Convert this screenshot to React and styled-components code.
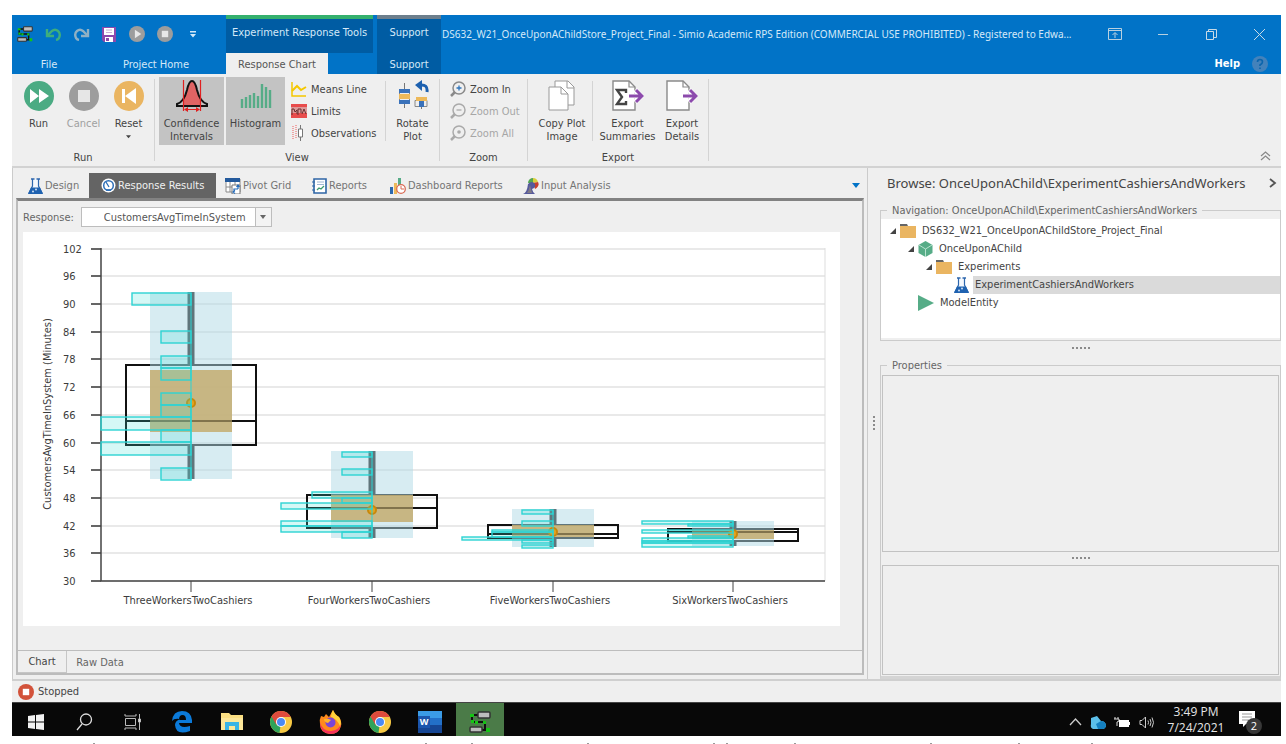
import styled, { createGlobalStyle } from 'styled-components';

const GlobalStyle = createGlobalStyle`
  * {
    box-sizing: border-box;
  }

  body {
    margin: 0;
    background: #fff;
    color: #444;
    font: 11px/13px 'DejaVu Sans Condensed', 'Noto Sans', sans-serif;
  }

  button, select {
    margin: 0;
    padding: 0;
    border: 0;
    border-radius: 0;
    background: none;
    color: inherit;
    font: inherit;
  }

  svg {
    display: block;
    flex: none;
  }
`;

const Page = styled.div`
  min-height: 100vh;
  display: flex;
  flex-direction: column;
  padding: 15px 5px 0 12px;
`;

const Window = styled.div`
  flex: 1;
  display: flex;
  flex-direction: column;
  background: #efefef;
`;

/* title bar */

const TitleBar = styled.header`
  height: 38px;
  display: flex;
  background: #0173c7;
  color: #d5e9f8;
`;

const QuickAccess = styled.div`
  width: 214px;
  flex: none;
  display: flex;
  align-items: center;
  gap: 12px;
  padding-left: 5px;
`;

const IconButton = styled.button`
  display: flex;
  align-items: center;
  justify-content: center;
  width: ${(props) => props.$width || 16}px;
  height: 20px;
`;

const ContextTitle = styled.div`
  width: ${(props) => props.$width}px;
  flex: none;
  margin-right: ${(props) => props.$gap || 0}px;
  padding: 7px 0 0;
  border-top: 4px solid ${(props) => props.$accent};
  background: #005ca3;
  text-align: center;
  white-space: nowrap;
`;

const WindowTitle = styled.div`
  flex: 1;
  min-width: 0;
  padding: 13px 0 0 1px;
  font: 10px/13px 'Noto Sans', sans-serif;
  white-space: nowrap;
`;

const WindowButtons = styled.div`
  display: flex;
  align-items: center;
  flex: none;
  gap: 32px;
  padding: 0 14px 0 16px;
`;

const RibbonTabs = styled.nav`
  height: 21px;
  display: flex;
  background: #0173c7;
  color: #d5e9f8;
`;

const RibbonTab = styled.button`
  width: ${(props) => props.$width}px;
  margin-right: ${(props) => props.$gap || 0}px;
  padding-top: 2px;
  background: ${(props) => props.$fill || 'none'};
  color: ${(props) => (props.$active ? '#555' : '#d5e9f8')};
`;

const HelpArea = styled.div`
  margin-left: auto;
  display: flex;
  align-items: center;
  gap: 12px;
  padding-right: 13px;
  color: #fff;
  font-weight: bold;
`;

/* ribbon */

const Ribbon = styled.div`
  height: 94px;
  display: flex;
  border-bottom: 2px solid #d2d2d2;
`;

const Group = styled.section`
  width: ${(props) => props.$width}px;
  height: 82px;
  margin-top: 5px;
  display: flex;
  flex-direction: column;
  border-right: 1px solid #d4d4d4;
`;

const GroupBody = styled.div`
  height: 68px;
  flex: none;
  margin-top: -2px;
  display: flex;
  padding-left: ${(props) => props.$pad}px;
`;

const GroupName = styled.div`
  margin-top: 6px;
  text-align: center;
`;

const BigButton = styled.button`
  width: ${(props) => props.$width}px;
  height: 68px;
  margin-right: ${(props) => props.$gap || 0}px;
  padding-top: 3px;
  display: flex;
  flex-direction: column;
  align-items: center;
  gap: 5px;
  background: ${(props) => (props.$pressed ? '#c3c3c3' : 'none')};

  &:disabled {
    color: #a0a0a0;
  }
`;

const IconSlot = styled.span`
  height: 32px;
  flex: none;
  display: flex;
  align-items: center;
`;

const SmallStack = styled.div`
  width: ${(props) => props.$width}px;
  padding-top: 1px;
  display: flex;
  flex-direction: column;
`;

const SmallButton = styled.button`
  height: 22px;
  display: flex;
  align-items: center;
  gap: 4px;
  white-space: nowrap;

  &:disabled {
    color: #a6a6a6;
  }
`;

const InnerRule = styled.div`
  width: 1px;
  height: 60px;
  margin-top: 4px;
  background: #d4d4d4;
`;

const RibbonEnd = styled.div`
  margin-left: auto;
  display: flex;
  align-items: flex-end;
  padding: 0 8px 0 0;
`;

/* main area */

const Main = styled.main`
  flex: 1;
  display: flex;
  border-bottom: 2px solid #cfcfcf;
`;

const Documents = styled.section`
  flex: 1;
  min-width: 0;
  display: flex;
  flex-direction: column;
  padding: 5px 3px 4px;
  border: solid #cbcbcb;
  border-width: 0 1px;
`;

const DocTabs = styled.nav`
  height: 25px;
  display: flex;
`;

const DocTab = styled.button`
  width: ${(props) => props.$width}px;
  padding-left: ${(props) => props.$pad}px;
  display: flex;
  align-items: center;
  gap: 2px;
  background: ${(props) => (props.$active ? '#646464' : 'none')};
  color: ${(props) => (props.$active ? '#f0f0f0' : '#747474')};
  white-space: nowrap;
`;

const TabMenu = styled.button`
  margin-left: auto;
  width: 16px;
  display: flex;
  align-items: center;
  justify-content: center;
`;

const DocBody = styled.div`
  flex: 1;
  display: flex;
  flex-direction: column;
  border: 2px solid #bcbcbc;
  border-top: 3px solid #828282;
`;

const ResponseRow = styled.div`
  display: flex;
  align-items: center;
  gap: 7px;
  padding: 6px 0 5px 5px;
  color: #666;
`;

const SelectBox = styled.div`
  position: relative;
  width: 191px;
  height: 20px;
  border: 1px solid #bdbdbd;
  background: #fff;

  select {
    width: 100%;
    height: 18px;
    padding-left: 22px;
    appearance: none;
    color: #555;
  }

  svg {
    position: absolute;
    top: 0;
    right: 0;
    pointer-events: none;
  }
`;

const ChartPanel = styled.div`
  flex: 1;
  margin: 0 22px 0 5px;

  svg {
    width: 100%;
    height: auto;
    background: #fff;
  }

  text {
    font: 11px 'DejaVu Sans Condensed', 'Noto Sans', sans-serif;
    fill: #3c3c3c;
  }
`;

const BottomTabs = styled.nav`
  height: 23px;
  display: flex;
  border-top: 1px solid #bdbdbd;
`;

const BottomTab = styled.button`
  width: ${(props) => props.$width}px;
  height: 22px;
  border: solid #c6c6c6;
  border-width: ${(props) => (props.$active ? '0 1px 1px 0' : '0')};
  color: ${(props) => (props.$active ? '#444' : '#666')};
`;

const Grip = styled.div`
  width: 12px;
  display: flex;
  align-items: center;
  justify-content: center;
`;

const Dots = styled.div`
  width: ${(props) => (props.$vertical ? 2 : 18)}px;
  height: ${(props) => (props.$vertical ? 16 : 2)}px;
  margin: ${(props) => props.$margin || 0};
  background: repeating-linear-gradient(
    ${(props) => (props.$vertical ? '180deg' : '90deg')},
    #8b8b8b 0 2px, transparent 2px 4px
  );
`;

const Browser = styled.aside`
  width: 401px;
  flex: none;
  display: flex;
  flex-direction: column;
`;

const BrowseHeader = styled.div`
  height: 34px;
  display: flex;
  align-items: center;
  justify-content: space-between;
  padding: 0 4px 4px 7px;
  font: 13px/18px 'Noto Sans', sans-serif;
`;

const NavBox = styled.fieldset`
  height: 139px;
  min-width: 0;
  margin: 0;
  padding: 0;
  border: 1px solid #cbcbcb;

  legend {
    margin-left: 6px;
    padding: 0 5px;
    line-height: 17px;
    color: #666;
  }
`;

const Tree = styled.div`
  height: 119px;
  padding-top: 3px;
  background: #fff;
`;

const TreeRow = styled.div`
  height: 18px;
  display: flex;
  align-items: center;
  gap: 4px;
  padding-left: ${(props) => 9 + props.$depth * 18}px;
`;

const TreeLabel = styled.span`
  flex: 1;
  padding-left: 2px;
  line-height: 18px;
  background: ${(props) => (props.$selected ? '#dadada' : 'none')};
`;

const Properties = styled.fieldset`
  flex: 1;
  min-width: 0;
  margin: 9px 0 0;
  padding: 2px 1px 1px;
  display: flex;
  flex-direction: column;
  border: 1px solid #cbcbcb;
  border-bottom: 3px solid #d4d4d4;

  legend {
    margin-left: 5px;
    padding: 0 5px;
    line-height: 15px;
    color: #666;
  }
`;

const Pane = styled.div`
  height: ${(props) => props.$height || 'auto'};
  flex: ${(props) => props.$grow || 'none'};
  border: 1px solid #c2c2c2;
`;

const Status = styled.footer`
  height: 21px;
  display: flex;
  align-items: center;
  gap: 4px;
  padding-left: 6px;
`;

/* desktop task bar */

const TaskBar = styled.footer`
  height: 34px;
  display: flex;
  overflow: hidden;
  background: #080808;
  border-top: 1px solid #444;
  color: #e6e6e6;
`;

const TaskButton = styled.button`
  width: ${(props) => props.$width || 49}px;
  display: flex;
  align-items: center;
  justify-content: center;
  padding-top: 5px;
  background: ${(props) => (props.$active ? '#4b7b48' : 'none')};
`;

const Tray = styled.div`
  margin-left: auto;
  display: flex;
  align-items: center;
  gap: 8px;
  padding: 5px 18px 0 0;
`;

const Clock = styled.time`
  align-self: flex-start;
  width: 66px;
  margin-top: -4px;
  text-align: center;
  font: 12px/16px 'Open Sans', 'Noto Sans', sans-serif;
`;

const Below = styled.div`
  height: 8px;
  padding-top: 7px;
  overflow: hidden;
`;

const FlaskIcon = () => (
  <svg width="15" height="16" viewBox="0 0 15 16">
    <path d="M4.500 1v7L1 15h13l-3.500-7V1" fill="#f4f8fd" stroke="#2c66ad" strokeWidth="1.200" />
    <path d="M3 1h3.500M8.500 1H12" stroke="#2c66ad" strokeWidth="1.600" />
    <path d="M3 9.500h9l3 6.500H0z" fill="#1f62b0" />
    <circle cx="5" cy="13.500" r="1" fill="#cfe0f3" />
    <circle cx="8" cy="11.500" r="1" fill="#cfe0f3" />
  </svg>
);

const FlowIcon = ({ size }) => (
  <svg width={size} height={size} viewBox="0 0 22 22">
    <path d="M3 4v7h13v8M3 4h6M13 19h6" fill="none" stroke="#111" strokeWidth="2" />
    <rect x="9" y="1" width="12" height="6" rx="1" fill="#bdbdbd" stroke="#333" strokeWidth="1.500" />
    <rect x="1" y="16" width="12" height="5" rx="1" fill="#bdbdbd" stroke="#333" strokeWidth="1.500" />
    <path d="M1 3h4v3H1zM2 9h3v3H2zM6 10h3v3H6zM14 10h3v3h-3zM17 17h4v4h-4z" fill="#14c514" />
  </svg>
);

const UndoIcon = ({ color, flip }) => (
  <svg width="17" height="14" viewBox="0 0 17 14">
    <g transform={flip ? 'translate(17 0) scale(-1 1)' : undefined} fill="none" stroke={color} strokeWidth="2.400">
      <path d="M2 2v7h7" />
      <path d="M2.500 8.500L7 4Q10 1.500 13 4t1 7q-1 1.500-3 2" />
    </g>
  </svg>
);

const SaveIcon = () => (
  <svg width="14" height="15" viewBox="0 0 14 15">
    <path d="M0 0h14v15H2l-2-2z" fill="#8d49ad" />
    <path d="M2 1h10v7H2zM3 10h8v5H3z" fill="#fff" />
    <path d="M4 3h6M4 5.500h6" stroke="#c9b0d6" />
    <path d="M4 11h3v3H4z" fill="#8d49ad" />
  </svg>
);

const RoundIcon = ({ size, color, kind, mark = '#fff' }) => (
  <svg width={size} height={size} viewBox="0 0 30 30">
    <circle cx="15" cy="15" r="15" fill={color} />
    {kind === 'forward' && <path d="M6 8l9 7-9 7zM15 8l10 7-10 7z" fill={mark} />}
    {kind === 'play' && <path d="M11 7l12 8-12 8z" fill={mark} />}
    {kind === 'stop' && <path d="M9 9h12v12H9z" fill={mark} />}
    {kind === 'reset' && <path d="M8 8h3v14H8zM22 7v16l-11-8z" fill={mark} />}
  </svg>
);

const Caret = ({ color = '#444', size = 6 }) => (
  <svg width={size} height={size / 2 + 1} viewBox="0 0 8 5">
    <path d="M0 0h8L4 5z" fill={color} />
  </svg>
);

const QatCaret = () => (
  <svg width="6" height="7" viewBox="0 0 6 7">
    <path d="M0 0h6v1.500H0zM0 3h6L3 6.500z" fill="#d5e9f8" />
  </svg>
);

const BellIcon = () => (
  <svg width="32" height="34" viewBox="0 0 32 34">
    <path d="M7 26V20Q10 15 12 8 13.500 2 16 2t4 6q2 7 5 12v6z" fill="#e06464" />
    <path d="M1 27v-2Q8 23 11 11 13 2 16 2t5 9q3 12 10 14v2z" fill="none" stroke="#111" strokeWidth="2" />
    <path d="M7.500 1v31M24.500 1v31M9 30.500h14" stroke="#e02020" strokeWidth="1.200" />
    <path d="M8 30.500l4-2.500v5zM24 30.500L20 28v5z" fill="#e02020" />
  </svg>
);

const HistogramIcon = () => (
  <svg width="32" height="34" viewBox="0 0 32 34">
    <path d="M2 20v9M6 18v11M10 16v13M14 14v15M18 17v12M22 5v24M26 8v21M30 11v18" stroke="#56ac87" strokeWidth="2.400" />
  </svg>
);

const MeansIcon = () => (
  <svg width="16" height="16" viewBox="0 0 16 16">
    <path d="M1 1v14h14" fill="none" stroke="#f5c800" strokeWidth="1.500" />
    <path d="M1 10l5-5 4 4 5-3" fill="none" stroke="#f5c800" strokeWidth="2" />
  </svg>
);

const LimitsIcon = () => (
  <svg width="16" height="16" viewBox="0 0 16 16">
    <path d="M0 1h16v14H0z" fill="#e84c4c" />
    <path d="M0 4h16v6H0z" fill="#d99" />
    <path d="M1 12V6h2l1 3 2-2v4M7 12V6h3v4M11 11l2-5 2 5" fill="none" stroke="#6a3030" />
  </svg>
);

const ObservationsIcon = () => (
  <svg width="16" height="16" viewBox="0 0 16 16">
    <path d="M2 1v14M5 0v14" stroke="#ef8d8d" strokeWidth="1.500" strokeDasharray="1 1" />
    <path d="M9.500 0v4M9.500 12v4M7.500 4h4v8h-4z" fill="#fff" stroke="#777" />
  </svg>
);

const RotateIcon = () => (
  <svg width="32" height="32" viewBox="0 0 32 32">
    <path d="M7.500 3v25M24.500 17v12" stroke="#777" />
    <path d="M2.500 10.500h10v12h-10zM18 20.500h12v6H18z" fill="#eee" stroke="#888" />
    <path d="M2 9h11v4H2zM2 20h11v4H2zM22 20h5v7h-5z" fill="#3a72ba" />
    <path d="M2 14h11v5H2zM19 17h11v4H19z" fill="#edb95a" />
    <path d="M23 5q8-1 7 7" fill="none" stroke="#1d61b0" strokeWidth="3" />
    <path d="M25 0v11l-7-6z" fill="#1d61b0" />
  </svg>
);

const ZoomIcon = ({ kind, color = '#8a8a8a' }) => (
  <svg width="16" height="16" viewBox="0 0 16 16" fill="none">
    <circle cx="9" cy="7" r="6" stroke={color} strokeWidth="1.500" />
    <path d="M5 11l-4 4" stroke={color} strokeWidth="2.500" />
    {kind === 'in' && <path d="M9 4.500v5M6.500 7h5" stroke="#2f74ba" strokeWidth="1.300" />}
    {kind === 'out' && <path d="M6.500 7h5" stroke={color} strokeWidth="1.300" />}
    {kind === 'all' && <circle cx="9" cy="7" r="1.800" fill={color} />}
  </svg>
);

const CopyIcon = () => (
  <svg width="28" height="32" viewBox="0 0 28 32">
    <path d="M7 1h13l6 6v18H7z" fill="#fff" stroke="#999" />
    <path d="M19 1v7h7" fill="none" stroke="#999" />
    <path d="M1 7h12l7 7v16H1z" fill="#fff" stroke="#999" />
    <path d="M13 7v7h7" fill="none" stroke="#999" />
  </svg>
);

const ExportIcon = ({ sigma }) => (
  <svg width="32" height="32" viewBox="0 0 32 32">
    <path d="M1 1h16l6 6v23H1z" fill="#fff" stroke="#8a8a8a" strokeWidth="1.400" />
    <path d="M17 1v6h6" fill="none" stroke="#8a8a8a" strokeWidth="1.200" />
    {sigma && <path d="M14 13v-3H5l5 7-5 7h9v-3" fill="none" stroke="#444" strokeWidth="2.400" />}
    <path d="M16 16h12M23 10l6 6-6 6" fill="none" stroke="#fff" strokeWidth="5" />
    <path d="M17 16h13M24 10l6 6-6 6" fill="none" stroke="#8c4aac" strokeWidth="3" />
  </svg>
);

const GaugeIcon = () => (
  <svg width="15" height="15" viewBox="0 0 15 15">
    <circle cx="7.500" cy="7.500" r="7" fill="#fff" />
    <circle cx="7.500" cy="7.500" r="4.800" fill="none" stroke="#2d6fb8" strokeWidth="1.500" />
    <path d="M5 4l3 5M5 12h5" stroke="#2d6fb8" strokeWidth="1.300" />
  </svg>
);

const PivotIcon = () => (
  <svg width="16" height="16" viewBox="0 0 16 16">
    <path d="M1 1h14v13H1zM1 9h14M5 4v10M10 4v10" fill="#fff" stroke="#8a8a8a" />
    <path d="M0 0h15v4H0z" fill="#245a9c" />
    <path d="M7 7h8v9H7z" fill="#fff" stroke="#777" />
    <path d="M9 14v-3h4M13 8v3M11.500 9l1.500-2 1.500 2M10 12.500l-2 1.500 2 1.500" fill="none" stroke="#2068b8" strokeWidth="1.200" />
  </svg>
);

const ReportIcon = () => (
  <svg width="15" height="16" viewBox="0 0 15 16">
    <path d="M2 1h12v14H2z" fill="#fff" stroke="#2f66a6" strokeWidth="1.600" />
    <path d="M5 4h7M5 6.500h7" stroke="#9fb7d3" />
    <path d="M5 12l2-2 2 1 3-3" fill="none" stroke="#3d9a70" strokeWidth="1.300" />
    <path d="M0 4h3M0 8h3M0 12h3" stroke="#2f66a6" />
  </svg>
);

const DashboardIcon = () => (
  <svg width="16" height="16" viewBox="0 0 16 16">
    <path d="M0 9h3v7H0z" fill="#2c68ae" />
    <path d="M4 5h3v11H4z" fill="#edb95a" />
    <path d="M8 0h3v8H8z" fill="#56ac87" />
    <circle cx="11" cy="11" r="4.300" fill="#fff" stroke="#d96b55" strokeWidth="1.300" />
    <path d="M11 8v3h3" fill="none" stroke="#d96b55" />
  </svg>
);

const AnalysisIcon = () => (
  <svg width="16" height="16" viewBox="0 0 16 16">
    <path d="M10 5V0a5 5 0 0 0-5 5z" fill="#53a653" />
    <path d="M10 5V0a5.500 5.500 0 0 1 5 4z" fill="#d8cf3c" />
    <path d="M10 5l5-1q2 4-3 7z" fill="#c8402e" />
    <path d="M0 16q4-1 5-10 4-4 7 0 1 4-3 5 1 4 3 5z" fill="#565a9c" />
    <path d="M4 15q2-3 3-8l2 8z" fill="#807a86" />
  </svg>
);

const FolderIcon = () => (
  <svg width="16" height="15" viewBox="0 0 16 15">
    <path d="M0 0h7l1 2h-8z" fill="#666" />
    <path d="M0 2h16v12H0z" fill="#eab561" />
  </svg>
);

const CubeIcon = () => (
  <svg width="15" height="16" viewBox="0 0 15 16">
    <path d="M7.500 0L14.500 4v8l-7 4-7-4V4z" fill="#56ac87" />
    <path d="M1 4l6.500 4L14 4M7.500 8v8" fill="none" stroke="#b8e2cf" />
  </svg>
);

const EntityIcon = () => (
  <svg width="16" height="16" viewBox="0 0 16 16"><path d="M0 0l16 8-16 8z" fill="#56ac87" /></svg>
);

const Expander = ({ hidden }) => (
  <svg width="6" height="6" viewBox="0 0 6 6">{!hidden && <path d="M6 0v6H0z" fill="#444" />}</svg>
);

const ChromeIcon = () => (
  <svg width="22" height="22" viewBox="0 0 22 22">
    <circle cx="11" cy="11" r="11" fill="#f7c944" />
    <path d="M11 11L1.500 5.500a11 11 0 0 0 8 16.400z" fill="#2fa35a" />
    <path d="M11 6h9.800A11 11 0 0 0 1.500 5.500l5 8.500z" fill="#de4b3d" />
    <circle cx="11" cy="11" r="5" fill="#fff" />
    <circle cx="11" cy="11" r="4" fill="#4a8af4" />
  </svg>
);

const WindowsIcon = () => (
  <svg width="16" height="16" viewBox="0 0 16 16">
    <path d="M0 2l7-1v6.500H0zM8 1l8-1v7.500H8zM0 8.500h7V15l-7-1zM8 8.500h8V16l-8-1z" fill="#f2f2f2" />
  </svg>
);

const SearchIcon = () => (
  <svg width="17" height="18" viewBox="0 0 17 18" fill="none" stroke="#ddd" strokeWidth="1.300">
    <circle cx="10" cy="6.500" r="5.500" />
    <path d="M6 11l-5 6" />
  </svg>
);

const TaskViewIcon = () => (
  <svg width="17" height="16" viewBox="0 0 17 16" fill="none" stroke="#bbb">
    <path d="M1 0v2h11V0M1.500 4.500h10v7h-10zM1 16v-2h11v2M15.500 0v16" />
    <path d="M14.500 5h2v3h-2z" fill="#ddd" />
  </svg>
);

const EdgeIcon = () => (
  <svg width="20" height="22" viewBox="0 0 20 22">
    <path d="M0 10Q1 0 10 0q9 0 10 9v3H7q1 6 11 3v5Q4 25 3 14q0-4 5-6-6-1-8 2zM7 9h7q0-5-3.500-5T7 9z" fill="#0b7ad9" fillRule="evenodd" />
  </svg>
);

const ExplorerIcon = () => (
  <svg width="22" height="18" viewBox="0 0 22 18">
    <path d="M0 0h8l2 2h12v15H0z" fill="#fbdf82" />
    <path d="M0 5h22v12H0z" fill="#fde79a" />
    <path d="M4 17V9h14v8h-4v-4H8v4z" fill="#39b4e6" />
  </svg>
);

const FirefoxIcon = () => (
  <svg width="23" height="24" viewBox="0 0 23 24">
    <path d="M2 6l3 1 2-3 3 3 4-7q2 5 6 7 3 4 2 9-2 8-11 8Q1 23 1 14 0 10 2 6z" fill="#ff8a1c" />
    <path d="M1 12q2 9 11 9 8-1 10-7-1 10-11 10Q1 23 1 12z" fill="#f5315b" />
    <path d="M14 0q2 5 6 7 3 5 1 9-3-7-9-9 0-4 2-7z" fill="#ffd23a" />
    <circle cx="11.500" cy="12.500" r="5" fill="#7b45d6" />
    <path d="M5 9q4-1 7 1l-3 3q-4-1-4-4z" fill="#ffb32c" />
  </svg>
);

const WordTile = styled.span`
  width: 24px;
  height: 22px;
  display: flex;
  align-items: center;
  background: linear-gradient(#3b9be6 0 30%, #2370c8 30% 62%, #164694 62%);
  color: #fff;
  font: bold 9px/12px 'Open Sans', sans-serif;

  span {
    width: 12px;
    background: #1c56ad;
  }
`;

const gridValues = [102, 96, 90, 84, 78, 72, 66, 60, 54, 48, 42, 36, 30];

// each bar is [left, top, bottom] and ends at the scenario's centre line
const scenarios = [
  {
    name: 'ThreeWorkersTwoCashiers', x: 191, whole: [292, 479], box: [365, 445], median: 421, ci: [370, 432], mean: 403,
    bars: [[132, 293, 305], [161, 331, 343], [161, 356, 368], [161, 368, 380], [161, 393, 405], [161, 405, 417],
      [101, 417, 430], [161, 430, 442], [101, 442, 455], [161, 468, 480]],
  },
  {
    name: 'FourWorkersTwoCashiers', x: 372, whole: [451, 538], box: [495, 528], median: 508, ci: [495, 522], mean: 510,
    bars: [[342, 452, 457], [342, 469, 475], [312, 492, 498], [342, 498, 503], [281, 503, 509],
      [281, 521, 526], [281, 526, 532], [342, 532, 538]],
  },
  {
    name: 'FiveWorkersTwoCashiers', x: 553, whole: [509, 547], box: [525, 538], median: 534, ci: [525, 537], mean: 532,
    bars: [[522, 510, 514], [522, 521, 526], [492, 530, 532], [492, 532, 537], [462, 537, 540],
      [522, 540, 543], [522, 545, 548]],
  },
  {
    name: 'SixWorkersTwoCashiers', x: 733, whole: [521, 546], box: [529, 541], median: 532, ci: [530, 539], mean: 534,
    bars: [[642, 521, 524], [688, 524, 526], [642, 530, 533], [688, 536, 538], [642, 538, 541], [642, 541, 543],
      [642, 543, 547]],
  },
];

const yOf = (value) => 581 - Math.round((value - 30) * 4.615);

const Scenario = ({ data }) => {
  const { x, whole, box, ci } = data;
  return (
    <g>
      <rect x={x - 65} y={box[0]} width="130" height={box[1] - box[0]} fill="none" stroke="#111" strokeWidth="2" />
      <path d={`M${x - 65} ${data.median}h130`} stroke="#111" strokeWidth="2" />
      <path d={`M${x} ${whole[0]}V${box[0]}M${x} ${box[1]}V${whole[1]}`} stroke="#111" strokeWidth="7" />
      <rect x={x - 41} y={whole[0]} width="82" height={ci[0] - whole[0]} fill="#b0d9e5" fillOpacity=".5" />
      <rect x={x - 41} y={ci[1]} width="82" height={whole[1] - ci[1]} fill="#b0d9e5" fillOpacity=".5" />
      <rect x={x - 41} y={ci[0]} width="82" height={ci[1] - ci[0]} fill="#c2b078" fillOpacity=".92" />
      <path d={`M${x - 41} ${data.median}h82`} stroke="#5f5433" strokeOpacity=".6" strokeWidth="2" />
      <circle cx={x} cy={data.mean} r="4" fill="#e2a321" stroke="#c8880b" strokeWidth="2" />
      {data.bars.map(([left, top, bottom]) => (
        <rect key={top} x={left} y={top} width={x - left} height={bottom - top} fill="#40e0d8" fillOpacity=".22" stroke="#2dd3d3" strokeWidth="1.400" />
      ))}
      <path d={`M${x} ${data.bars[0][1]}V${whole[1]}`} stroke="#2dd3d3" />
      <path d={`M${x} 581v11`} stroke="#444" />
      <text x={x - 3} y="604" textAnchor="middle">{data.name}</text>
    </g>
  );
};

const Chart = () => (
  <svg viewBox="23 232 817 394" role="img" aria-label="Response chart">
    {gridValues.map((value) => (
      <g key={value}>
        <path d={`M101 ${yOf(value)}H825`} stroke="#e2e2e2" strokeWidth="1.500" />
        <path d={`M91 ${yOf(value)}h10`} stroke="#333" strokeWidth="1.500" />
        <text x="63" y={yOf(value) + 4}>{value}</text>
      </g>
    ))}
    <path d="M825 248v333" stroke="#ddd" />
    <path d="M101 248v333h724" fill="none" stroke="#444" strokeWidth="1.500" />
    <text transform="translate(51 414) rotate(-90)" textAnchor="middle">CustomersAvgTimeInSystem (Minutes)</text>
    {scenarios.map((data) => <Scenario key={data.name} data={data} />)}
  </svg>
);

const treeItems = [
  { depth: 0, icon: <FolderIcon />, label: 'DS632_W21_OnceUponAChildStore_Project_Final' },
  { depth: 1, icon: <CubeIcon />, label: 'OnceUponAChild' },
  { depth: 2, icon: <FolderIcon />, label: 'Experiments' },
  { depth: 3, icon: <FlaskIcon />, label: 'ExperimentCashiersAndWorkers', leaf: true, selected: true },
  { depth: 1, icon: <EntityIcon />, label: 'ModelEntity', leaf: true },
];

const docTabs = [
  { label: 'Design', icon: <FlaskIcon />, width: 73, pad: 12 },
  { label: 'Response Results', icon: <GaugeIcon />, width: 127, pad: 12, active: true },
  { label: 'Pivot Grid', icon: <PivotIcon />, width: 85, pad: 9 },
  { label: 'Reports', icon: <ReportIcon />, width: 78, pad: 11 },
  { label: 'Dashboard Reports', icon: <DashboardIcon />, width: 133, pad: 11 },
  { label: 'Input Analysis', icon: <AnalysisIcon />, width: 100, pad: 11 },
];

const Header = () => (
  <>
    <TitleBar>
      <QuickAccess>
        <FlowIcon size={16} />
        <IconButton aria-label="Undo"><UndoIcon color="#3fae7c" /></IconButton>
        <IconButton aria-label="Redo"><UndoIcon color="#8fb0c4" flip /></IconButton>
        <IconButton aria-label="Save"><SaveIcon /></IconButton>
        <IconButton aria-label="Play"><RoundIcon size={16} color="#9d9d9d" kind="play" mark="#e8e8e8" /></IconButton>
        <IconButton aria-label="Stop"><RoundIcon size={16} color="#9d9d9d" kind="stop" mark="#e8e8e8" /></IconButton>
        <IconButton aria-label="Customize toolbar"><QatCaret /></IconButton>
      </QuickAccess>
      <ContextTitle $width={147} $gap={4} $accent="#34b06e">Experiment Response Tools</ContextTitle>
      <ContextTitle $width={64} $accent="#6d7f8d">Support</ContextTitle>
      <WindowTitle>
        DS632_W21_OnceUponAChildStore_Project_Final - Simio Academic RPS Edition (COMMERCIAL USE PROHIBITED) - Registered to Edwa...
      </WindowTitle>
      <WindowButtons>
        <IconButton aria-label="Ribbon options">
          <svg width="14" height="12" viewBox="0 0 14 12" fill="none" stroke="#b8d0e0">
            <path d="M.5.500h13v11H.5zM.5 2.500h13M7 10V5M4.500 7L7 4.500 9.500 7" />
          </svg>
        </IconButton>
        <IconButton aria-label="Minimize">
          <svg width="10" height="10" viewBox="0 0 10 10" stroke="#b8d0e0"><path d="M0 5.500h10" /></svg>
        </IconButton>
        <IconButton aria-label="Restore">
          <svg width="11" height="11" viewBox="0 0 11 11" fill="none" stroke="#c8dae6">
            <path d="M.5 2.500h7v8h-7zM2.500 2.500v-2h8v8h-3" />
          </svg>
        </IconButton>
        <IconButton aria-label="Close">
          <svg width="11" height="11" viewBox="0 0 11 11" stroke="#c8dae6"><path d="M0 0l11 11M11 0L0 11" /></svg>
        </IconButton>
      </WindowButtons>
    </TitleBar>
    <RibbonTabs>
      <RibbonTab $width={74}>File</RibbonTab>
      <RibbonTab $width={140}>Project Home</RibbonTab>
      <RibbonTab $width={102} $gap={49} $fill="#efefef" $active>Response Chart</RibbonTab>
      <RibbonTab $width={64} $fill="#005ca3">Support</RibbonTab>
      <HelpArea>
        Help
        <svg width="16" height="16" viewBox="0 0 16 16">
          <circle cx="8" cy="8" r="8" fill="#4382bb" />
          <path d="M5.500 6q0-2.500 2.500-2.500T10.500 6Q10.500 7.500 8 9v1M8 11.500v1.500" fill="none" stroke="#0b65ad" strokeWidth="1.600" />
        </svg>
      </HelpArea>
    </RibbonTabs>
  </>
);

const RibbonBar = () => (
  <Ribbon>
    <Group $width={143}>
      <GroupBody $pad={4}>
        <BigButton $width={45}>
          <IconSlot><RoundIcon size={30} color="#4bab83" kind="forward" /></IconSlot>
          <span>Run</span>
        </BigButton>
        <BigButton $width={45} disabled>
          <IconSlot><RoundIcon size={30} color="#9d9d9d" kind="stop" mark="#e6e6e6" /></IconSlot>
          <span>Cancel</span>
        </BigButton>
        <BigButton $width={45}>
          <IconSlot><RoundIcon size={30} color="#eab561" kind="reset" /></IconSlot>
          <span>Reset</span>
          <Caret size={5} />
        </BigButton>
      </GroupBody>
      <GroupName>Run</GroupName>
    </Group>
    <Group $width={285}>
      <GroupBody $pad={4}>
        <BigButton $width={65} $gap={2} $pressed>
          <IconSlot><BellIcon /></IconSlot>
          <span>Confidence<br />Intervals</span>
        </BigButton>
        <BigButton $width={59} $gap={6} $pressed>
          <IconSlot><HistogramIcon /></IconSlot>
          <span>Histogram</span>
        </BigButton>
        <SmallStack $width={94}>
          <SmallButton><MeansIcon />Means Line</SmallButton>
          <SmallButton><LimitsIcon />Limits</SmallButton>
          <SmallButton><ObservationsIcon />Observations</SmallButton>
        </SmallStack>
        <InnerRule />
        <BigButton $width={53}>
          <IconSlot><RotateIcon /></IconSlot>
          <span>Rotate<br />Plot</span>
        </BigButton>
      </GroupBody>
      <GroupName>View</GroupName>
    </Group>
    <Group $width={88}>
      <GroupBody $pad={10}>
        <SmallStack $width={78}>
          <SmallButton><ZoomIcon kind="in" />Zoom In</SmallButton>
          <SmallButton disabled><ZoomIcon kind="out" color="#aaa" />Zoom Out</SmallButton>
          <SmallButton disabled><ZoomIcon kind="all" color="#aaa" />Zoom All</SmallButton>
        </SmallStack>
      </GroupBody>
      <GroupName>Zoom</GroupName>
    </Group>
    <Group $width={181}>
      <GroupBody $pad={4}>
        <BigButton $width={60}>
          <IconSlot><CopyIcon /></IconSlot>
          <span>Copy Plot<br />Image</span>
        </BigButton>
        <InnerRule />
        <BigButton $width={69}>
          <IconSlot><ExportIcon sigma /></IconSlot>
          <span>Export<br />Summaries</span>
        </BigButton>
        <BigButton $width={40}>
          <IconSlot><ExportIcon /></IconSlot>
          <span>Export<br />Details</span>
        </BigButton>
      </GroupBody>
      <GroupName>Export</GroupName>
    </Group>
    <RibbonEnd>
      <IconButton aria-label="Collapse ribbon">
        <svg width="11" height="10" viewBox="0 0 11 10" fill="none" stroke="#888" strokeWidth="1.200">
          <path d="M1 5l4.500-4L10 5M1 9l4.500-4L10 9" />
        </svg>
      </IconButton>
    </RibbonEnd>
  </Ribbon>
);

const DocumentArea = () => (
  <Documents>
    <DocTabs>
      {docTabs.map((tab) => (
        <DocTab key={tab.label} $width={tab.width} $pad={tab.pad} $active={tab.active}>{tab.icon}{tab.label}</DocTab>
      ))}
      <TabMenu aria-label="More tabs"><Caret color="#0173c7" size={8} /></TabMenu>
    </DocTabs>
    <DocBody>
      <ResponseRow>
        <label htmlFor="response">Response:</label>
        <SelectBox>
          <select id="response"><option>CustomersAvgTimeInSystem</option></select>
          <svg width="16" height="18" viewBox="0 0 16 18">
            <path d="M0 0h16v18H0z" fill="#f3f3f3" />
            <path d="M.5 0v18" stroke="#bdbdbd" />
            <path d="M5 7h6l-3 4z" fill="#666" />
          </svg>
        </SelectBox>
      </ResponseRow>
      <ChartPanel><Chart /></ChartPanel>
      <BottomTabs>
        <BottomTab $width={49} $active>Chart</BottomTab>
        <BottomTab $width={66}>Raw Data</BottomTab>
      </BottomTabs>
    </DocBody>
  </Documents>
);

const BrowserArea = () => (
  <Browser>
    <BrowseHeader>
      Browse: OnceUponAChild\ExperimentCashiersAndWorkers
      <svg width="8" height="10" viewBox="0 0 8 10" fill="none" stroke="#555" strokeWidth="1.800"><path d="M1 1l5 4-5 4" /></svg>
    </BrowseHeader>
    <NavBox>
      <legend>Navigation: OnceUponAChild\ExperimentCashiersAndWorkers</legend>
      <Tree>
        {treeItems.map((item) => (
          <TreeRow key={item.label} $depth={item.depth}>
            <Expander hidden={item.leaf} />
            {item.icon}
            <TreeLabel $selected={item.selected}>{item.label}</TreeLabel>
          </TreeRow>
        ))}
      </Tree>
    </NavBox>
    <Dots $margin="6px auto 0" />
    <Properties>
      <legend>Properties</legend>
      <Pane $grow={1} />
      <Dots $margin="5px auto 6px" />
      <Pane $height="110px" />
    </Properties>
  </Browser>
);

const Desktop = () => (
  <TaskBar>
    <TaskButton $width={48} aria-label="Start"><WindowsIcon /></TaskButton>
    <TaskButton $width={48} aria-label="Search"><SearchIcon /></TaskButton>
    <TaskButton $width={48} aria-label="Task view"><TaskViewIcon /></TaskButton>
    <TaskButton $width={52} aria-label="Edge"><EdgeIcon /></TaskButton>
    <TaskButton $width={48} aria-label="File Explorer"><ExplorerIcon /></TaskButton>
    <TaskButton $width={50} aria-label="Chrome"><ChromeIcon /></TaskButton>
    <TaskButton aria-label="Firefox"><FirefoxIcon /></TaskButton>
    <TaskButton aria-label="Chrome second window"><ChromeIcon /></TaskButton>
    <TaskButton $width={52} aria-label="Word"><WordTile><span>W</span></WordTile></TaskButton>
    <TaskButton $width={48} $active aria-label="Simio"><FlowIcon size={22} /></TaskButton>
    <Tray>
      <svg width="13" height="8" viewBox="0 0 13 8" fill="none" stroke="#ccc" strokeWidth="1.300"><path d="M1 7l5.500-6L12 7" /></svg>
      <svg width="16" height="13" viewBox="0 0 16 13">
        <path d="M1 2l6-2 4 5q4 0 5 4 0 3-3 4H3q-3-1-2-5z" fill="#5cc0ea" />
        <path d="M6 8l5-3q4 0 5 4 0 3-3 4H8z" fill="#1580c0" />
      </svg>
      <svg width="17" height="11" viewBox="0 0 17 11">
        <path d="M1 0v2M4 0v2M0 2h5v2L3 5v4" fill="none" stroke="#ddd" />
        <path d="M5 3h10v2h1v3h-1v2H5z" fill="#fff" />
      </svg>
      <svg width="16" height="13" viewBox="0 0 16 13" fill="none" stroke="#ccc">
        <path d="M1 4.500h2L6.500 1v11L3 8.500H1zM9 4.500q1 2 0 4M11 3q2 3.500 0 7M13 1.500q3 5 0 10" />
      </svg>
      <Clock>3:49 PM<br />7/24/2021</Clock>
      <svg width="26" height="24" viewBox="0 0 26 24">
        <path d="M2 1h16v13h-9l-3 3v-3H2z" fill="#fff" />
        <path d="M5 4h10M5 7h10M5 10h7" stroke="#999" />
        <circle cx="17" cy="16" r="8" fill="#383838" />
        <text x="17" y="20" textAnchor="middle" fill="#fff" fontSize="11" fontFamily="Open Sans">2</text>
      </svg>
    </Tray>
  </TaskBar>
);

const App = () => (
  <Page>
    <GlobalStyle />
    <Window>
      <Header />
      <RibbonBar />
      <Main>
        <DocumentArea />
        <Grip><Dots $vertical /></Grip>
        <BrowserArea />
      </Main>
      <Status><RoundIcon size={16} color="#d2523a" kind="stop" />Stopped</Status>
    </Window>
    <Desktop />
    <Below>
      <svg width="1100" height="1" viewBox="12 0 1100 1">
        <path d="M93 .5h2M425 .5h2M471 .5h2M587 .5h2M713 .5h2M726 .5h2M794 .5h2M930 .5h2M1018 .5h2M1091 .5h2" stroke="#999" />
      </svg>
    </Below>
  </Page>
);

export default App;
